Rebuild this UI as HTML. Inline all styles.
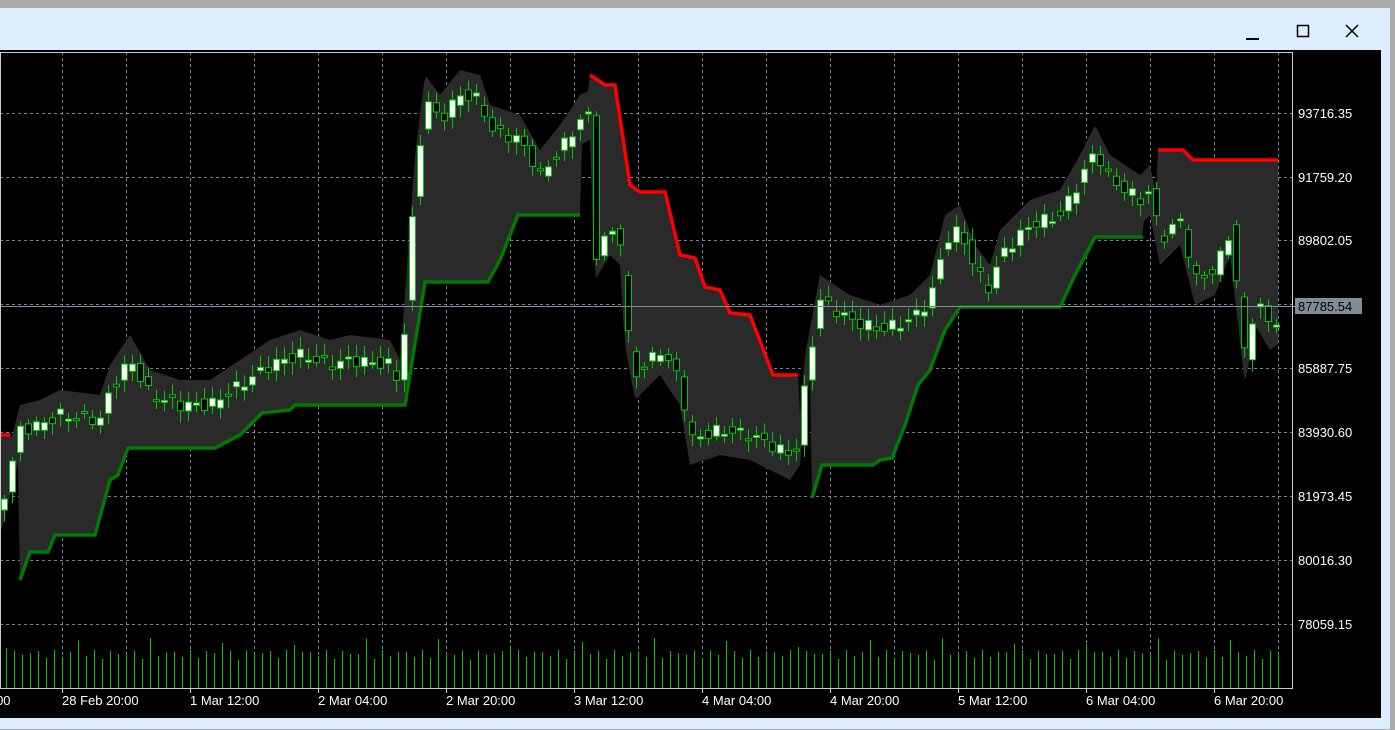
<!DOCTYPE html><html><head><style>
body{margin:0;width:1395px;height:730px;overflow:hidden;background:#ababab;font-family:"Liberation Sans",sans-serif}
#win{position:absolute;left:0;top:8px;width:1390px;height:721px;background:#dcedfd}
#chart{position:absolute;left:0;top:50px;width:1381px;height:668px;background:#000}
</style></head><body>
<div id="win">
<svg style="position:absolute;left:1240px;top:14px" width="130" height="24">
<line x1="6" y1="17" x2="19" y2="17" stroke="#000" stroke-width="2"/>
<rect x="57.5" y="3.5" width="11" height="11" fill="none" stroke="#000" stroke-width="1.5"/>
<path d="M106 3L118 15M118 3L106 15" stroke="#000" stroke-width="1.5"/>
</svg>
</div>
<div id="chart"><svg id="s" width="1381" height="668" style="position:absolute;left:0;top:0"></svg></div>
<script>
(function(){
function pl(a,x){if(x<a[0]||x>a[a.length-2])return null;for(var i=0;i<a.length-2;i+=2){if(x>=a[i]&&x<=a[i+2]){var t=(x-a[i])/((a[i+2]-a[i])||1);return a[i+1]+t*(a[i+3]-a[i+1]);}}return null}
function co(){for(var i=0;i<arguments.length;i++)if(arguments[i]!==null)return arguments[i];return null}
var P=[-20,510,0,510,20,430,40,425,60,415,100,420,110,390,130,360,150,395,180,405,210,405,240,385,270,365,300,355,330,365,350,360,390,365,400,385,405,320,415,180,425,100,440,120,460,95,480,100,490,130,520,140,540,175,560,150,580,120,590,115,595,255,610,230,620,240,625,320,635,375,660,350,680,380,690,440,720,430,750,435,770,445,790,455,800,440,805,380,820,300,850,320,880,330,910,320,930,300,945,240,960,230,975,270,990,290,1000,255,1030,225,1060,215,1080,180,1095,150,1110,180,1140,200,1150,190,1160,240,1180,220,1195,280,1215,270,1230,230,1245,360,1255,300,1270,325,1290,310];
var R1=[0,385,10,385],R2=[590,25,605,35,615,35,630,135,640,142,665,142,680,205,695,208,705,237,720,240,730,263,750,265,773,325,798,325],R3=[1158,100,1183,100,1193,110,1278,110];
var G1=[20,530,30,502,48,502,55,485,95,485,110,430,118,425,128,398,215,398,240,385,262,363,290,360,295,355,405,355,425,232,488,232,500,210,518,165,580,165],G2=[812,448,822,415,873,415,880,410,892,408,905,375,918,335,930,320,945,280,960,257,1060,257,1075,225,1095,187,1143,187];
function pr(x){return pl(P,x)-50}
var h='';
for(var x=62;x<1290;x+=64)h+='<line x1="'+(x+.5)+'" y1="2" x2="'+(x+.5)+'" y2="638" stroke="#6f8797" stroke-dasharray="3,3"/>';
var yl=[63,127,190,254,318,382,446,510,574],lb=['93716.35','91759.20','89802.05','87845.00','85887.75','83930.60','81973.45','80016.30','78059.15'];
yl.forEach(function(y,i){h+='<line x1="0" y1="'+(y+.5)+'" x2="1296" y2="'+(y+.5)+'" stroke="#6f8797" stroke-dasharray="3,3"/>';if(i!=3)h+='<text x="1298" y="'+(y+5)+'" fill="#fff" font-size="13" font-family="Liberation Sans">'+lb[i]+'</text>'});
var tp=[],bt=[];
for(var x=0;x<=1278;x+=2){var p=pr(x);var r=co(pl(R1,x),pl(R2,x),pl(R3,x));var g=co(pl(G1,x),pl(G2,x));tp.push(x+','+(r!==null?r:p-25));bt.push(x+','+(g!==null?g:p+25));}
h+='<polygon fill="#2a2a2a" points="'+tp.join(' ')+' '+bt.reverse().join(' ')+'"/>';
for(var i=0;i<160;i++){var x=4+i*8;if(x>1278)break;var o=pr(x-6)+6*Math.sin(i*1.7),c=pr(x)+6*Math.sin(i*2.3+1);var hi=Math.min(o,c)-4-8*Math.abs(Math.sin(i*3.1)),lo=Math.max(o,c)+4+8*Math.abs(Math.cos(i*2.7));
h+='<line x1="'+(x+.5)+'" y1="'+hi+'" x2="'+(x+.5)+'" y2="'+lo+'" stroke="#00c800"/>';var t=Math.min(o,c),b=Math.max(o,c);if(b-t<2)b=t+2;
h+='<rect x="'+(x-2.5)+'" y="'+t+'" width="6" height="'+(b-t)+'" fill="'+(c<o?'#fff':'#000')+'" stroke="#00c800"/>';
var vh=28+10*Math.abs(Math.sin(i*1.3))+(i%9==0?12:0);h+='<line x1="'+(x+2.5)+'" y1="638" x2="'+(x+2.5)+'" y2="'+(638-vh)+'" stroke="#00c800"/>'}
function ln(a,c){var s='';for(var i=0;i<a.length;i+=2)s+=a[i]+','+a[i+1]+' ';return '<polyline fill="none" stroke="'+c+'" stroke-width="3.5" points="'+s+'"/>'}
h+=ln(R1,'#f00')+ln(R2,'#f00')+ln(R3,'#f00')+ln(G1,'#007a00')+ln(G2,'#007a00');
h+='<line x1="0" y1="256.5" x2="1296" y2="256.5" stroke="#7f8c99"/>';
h+='<rect x="0.5" y="2.5" width="1292" height="636" fill="none" stroke="#ccc"/>';
h+='<rect x="1295" y="248" width="67" height="16" fill="#7f8c99"/><text x="1298" y="261" fill="#000" font-size="13" font-family="Liberation Sans">87785.54</text>';
var tl=['20:00','28 Feb 20:00','1 Mar 12:00','2 Mar 04:00','2 Mar 20:00','3 Mar 12:00','4 Mar 04:00','4 Mar 20:00','5 Mar 12:00','6 Mar 04:00','6 Mar 20:00'];
tl.forEach(function(t,i){var x=-66+i*128;if(i==0)x=-22;h+='<line x1="'+(x+.5)+'" y1="638" x2="'+(x+.5)+'" y2="643" stroke="#ccc"/><text x="'+x+'" y="655" fill="#fff" font-size="13" font-family="Liberation Sans">'+t+'</text>'});
document.getElementById('s').innerHTML=h;
})();
</script>
</body></html>
